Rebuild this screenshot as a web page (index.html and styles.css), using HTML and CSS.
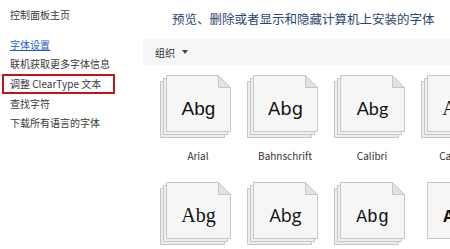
FILE: index.html
```html
<!DOCTYPE html>
<html lang="zh-CN">
<head>
<meta charset="utf-8">
<title>字体</title>
<link rel="stylesheet" href="styles.css">
</head>
<body>
<div class="window">
  <nav class="sidebar">
    <div class="home">控制面板主页</div>
    <ul class="links">
      <li><a class="link">字体设置</a></li>
      <li>联机获取更多字体信息</li>
      <li class="marked">调整 ClearType 文本</li>
      <li>查找字符</li>
      <li>下载所有语言的字体</li>
    </ul>
  </nav>
  <main class="main">
    <h1 class="title">预览、删除或者显示和隐藏计算机上安装的字体</h1>
    <div class="toolbar"><span class="org">组织</span><span class="caret"></span></div>
    <div class="grid">
      <div class="cell">
        <svg class="icon" viewBox="0 0 76 64" width="76" height="64">
          <path class="pg back" d="M0.5 6.5H57.5L64.5 13.5V62.5H0.5Z"/>
          <path class="pg mid" d="M3.5 3.5H60.5L67.5 10.5V59.5H3.5Z"/>
          <path class="pg front" d="M6.5 0.5H58.5L70.5 12.5V56.5H6.5Z"/>
          <path class="fold" d="M58.5 0.5V12.5H70.5Z"/>
          <text x="38.5" y="40" class="abg f-arial">Abg</text>
        </svg>
        <div class="label">Arial</div>
      </div>
      <div class="cell">
        <svg class="icon" viewBox="0 0 76 64" width="76" height="64">
          <path class="pg back" d="M0.5 6.5H57.5L64.5 13.5V62.5H0.5Z"/>
          <path class="pg mid" d="M3.5 3.5H60.5L67.5 10.5V59.5H3.5Z"/>
          <path class="pg front" d="M6.5 0.5H58.5L70.5 12.5V56.5H6.5Z"/>
          <path class="fold" d="M58.5 0.5V12.5H70.5Z"/>
          <text x="38.5" y="40" class="abg f-bahn">Abg</text>
        </svg>
        <div class="label">Bahnschrift</div>
      </div>
      <div class="cell">
        <svg class="icon" viewBox="0 0 76 64" width="76" height="64">
          <path class="pg back" d="M0.5 6.5H57.5L64.5 13.5V62.5H0.5Z"/>
          <path class="pg mid" d="M3.5 3.5H60.5L67.5 10.5V59.5H3.5Z"/>
          <path class="pg front" d="M6.5 0.5H58.5L70.5 12.5V56.5H6.5Z"/>
          <path class="fold" d="M58.5 0.5V12.5H70.5Z"/>
          <text x="38.5" y="40" class="abg f-calibri">Abg</text>
        </svg>
        <div class="label">Calibri</div>
      </div>
      <div class="cell">
        <svg class="icon" viewBox="0 0 76 64" width="76" height="64">
          <path class="pg back" d="M0.5 6.5H57.5L64.5 13.5V62.5H0.5Z"/>
          <path class="pg mid" d="M3.5 3.5H60.5L67.5 10.5V59.5H3.5Z"/>
          <path class="pg front" d="M6.5 0.5H58.5L70.5 12.5V56.5H6.5Z"/>
          <path class="fold" d="M58.5 0.5V12.5H70.5Z"/>
          <text x="38.5" y="40" class="abg f-serif">Abg</text>
        </svg>
        <div class="label">Cambria</div>
      </div>
      <div class="cell">
        <svg class="icon" viewBox="0 0 76 64" width="76" height="64">
          <path class="pg back" d="M0.5 6.5H57.5L64.5 13.5V62.5H0.5Z"/>
          <path class="pg mid" d="M3.5 3.5H60.5L67.5 10.5V59.5H3.5Z"/>
          <path class="pg front" d="M6.5 0.5H58.5L70.5 12.5V56.5H6.5Z"/>
          <path class="fold" d="M58.5 0.5V12.5H70.5Z"/>
          <text x="38.5" y="40" class="abg f-serif">Abg</text>
        </svg>
        <div class="label">Constantia</div>
      </div>
      <div class="cell">
        <svg class="icon" viewBox="0 0 76 64" width="76" height="64">
          <path class="pg back" d="M0.5 6.5H57.5L64.5 13.5V62.5H0.5Z"/>
          <path class="pg mid" d="M3.5 3.5H60.5L67.5 10.5V59.5H3.5Z"/>
          <path class="pg front" d="M6.5 0.5H58.5L70.5 12.5V56.5H6.5Z"/>
          <path class="fold" d="M58.5 0.5V12.5H70.5Z"/>
          <text x="38.5" y="40" class="abg f-corbel">Abg</text>
        </svg>
        <div class="label">Corbel</div>
      </div>
      <div class="cell">
        <svg class="icon" viewBox="0 0 76 64" width="76" height="64">
          <path class="pg back" d="M0.5 6.5H57.5L64.5 13.5V62.5H0.5Z"/>
          <path class="pg mid" d="M3.5 3.5H60.5L67.5 10.5V59.5H3.5Z"/>
          <path class="pg front" d="M6.5 0.5H58.5L70.5 12.5V56.5H6.5Z"/>
          <path class="fold" d="M58.5 0.5V12.5H70.5Z"/>
          <text x="38.5" y="40" class="abg f-mono">Abg</text>
        </svg>
        <div class="label">Courier New</div>
      </div>
      <div class="cell">
        <svg class="icon" viewBox="0 0 76 64" width="76" height="64">
          <path class="pg front" d="M6.5 0.5H58.5L70.5 12.5V56.5H6.5Z"/>
          <path class="fold" d="M58.5 0.5V12.5H70.5Z"/>
          <text x="38.5" y="40" class="abg f-mono-b">Abg</text>
        </svg>
        <div class="label">Courier</div>
      </div>
    </div>
  </main>
</div>
</body>
</html>
```

FILE: styles.css
```css
html, body {
  margin: 0;
  padding: 0;
  background: #ffffff;
}
body {
  width: 450px;
  height: 249px;
  overflow: hidden;
  font-family: "Noto Sans CJK SC", "Noto Sans", sans-serif;
  color: #333333;
}
.window {
  display: flex;
  height: 249px;
}
.sidebar {
  width: 143px;
  flex: none;
  padding: 7px 0 0 10px;
  box-sizing: border-box;
  font-size: 10px;
}
.home {
  line-height: 16px;
  color: #3a3a3a;
}
.links {
  list-style: none;
  margin: 0;
  padding: 0;
  margin-top: 12px;
}
.links li {
  line-height: 19.4px;
  height: 19.4px;
  white-space: nowrap;
  color: #3a3a3a;
}
.link {
  color: #1f5fbf;
  text-decoration: underline;
}
.links li.marked {
  margin-left: -8px;
  padding-left: 8px;
  width: 113px;
  height: 20px;
  line-height: 20px;
  box-sizing: border-box;
  outline: 2px solid #c1141e;
  outline-offset: -2px;
}
.main {
  flex: 1;
  min-width: 0;
}
.title {
  margin: 0;
  padding: 11px 0 0 29px;
  height: 28px;
  box-sizing: border-box;
  font-size: 12.5px;
  line-height: 16px;
  font-weight: normal;
  color: #2a4670;
  white-space: nowrap;
}
.toolbar {
  margin-top: 11px;
  height: 26px;
  background: #f4f6f8;
  display: flex;
  align-items: center;
  padding-left: 12px;
  font-size: 10px;
  color: #333333;
}
.caret {
  margin-left: 7px;
  width: 0;
  height: 0;
  border-left: 3px solid transparent;
  border-right: 3px solid transparent;
  border-top: 4px solid #444444;
}
.grid {
  display: grid;
  grid-template-columns: repeat(4, 87px);
  grid-auto-rows: 107px;
  padding: 10px 0 0 11.5px;
}
.cell {
  display: flex;
  flex-direction: column;
  align-items: center;
}
.icon {
  display: block;
  margin-left: 0;
  overflow: visible;
}
.pg {
  stroke: #c6c6c6;
  stroke-width: 1;
  fill: #f1f1f1;
}
.pg.back {
  fill: #ededed;
}
.pg.mid {
  fill: #f0f0f0;
}
.pg.front {
  fill: #f6f6f6;
}
.fold {
  fill: #e2e2e2;
  stroke: #c6c6c6;
  stroke-width: 1;
}
.abg {
  text-anchor: middle;
  font-size: 19px;
  fill: #111111;
}
.f-arial { font-family: "Liberation Sans", Arial, sans-serif; }
.f-bahn { font-family: "DejaVu Sans", sans-serif; font-size: 18px; }
.f-calibri { font-family: Lato, "Open Sans", sans-serif; font-size: 18px; }
.f-serif { font-family: "Liberation Serif", serif; font-size: 20px; }
.f-corbel { font-family: "Open Sans", sans-serif; font-size: 18px; }
.f-mono { font-family: "Liberation Mono", monospace; font-size: 18px; }
.f-mono-b { font-family: "Liberation Mono", monospace; font-size: 18px; font-weight: bold; }
.label {
  margin-top: 10px;
  font-size: 10px;
  line-height: 14px;
  color: #333333;
  white-space: nowrap;
}
```
